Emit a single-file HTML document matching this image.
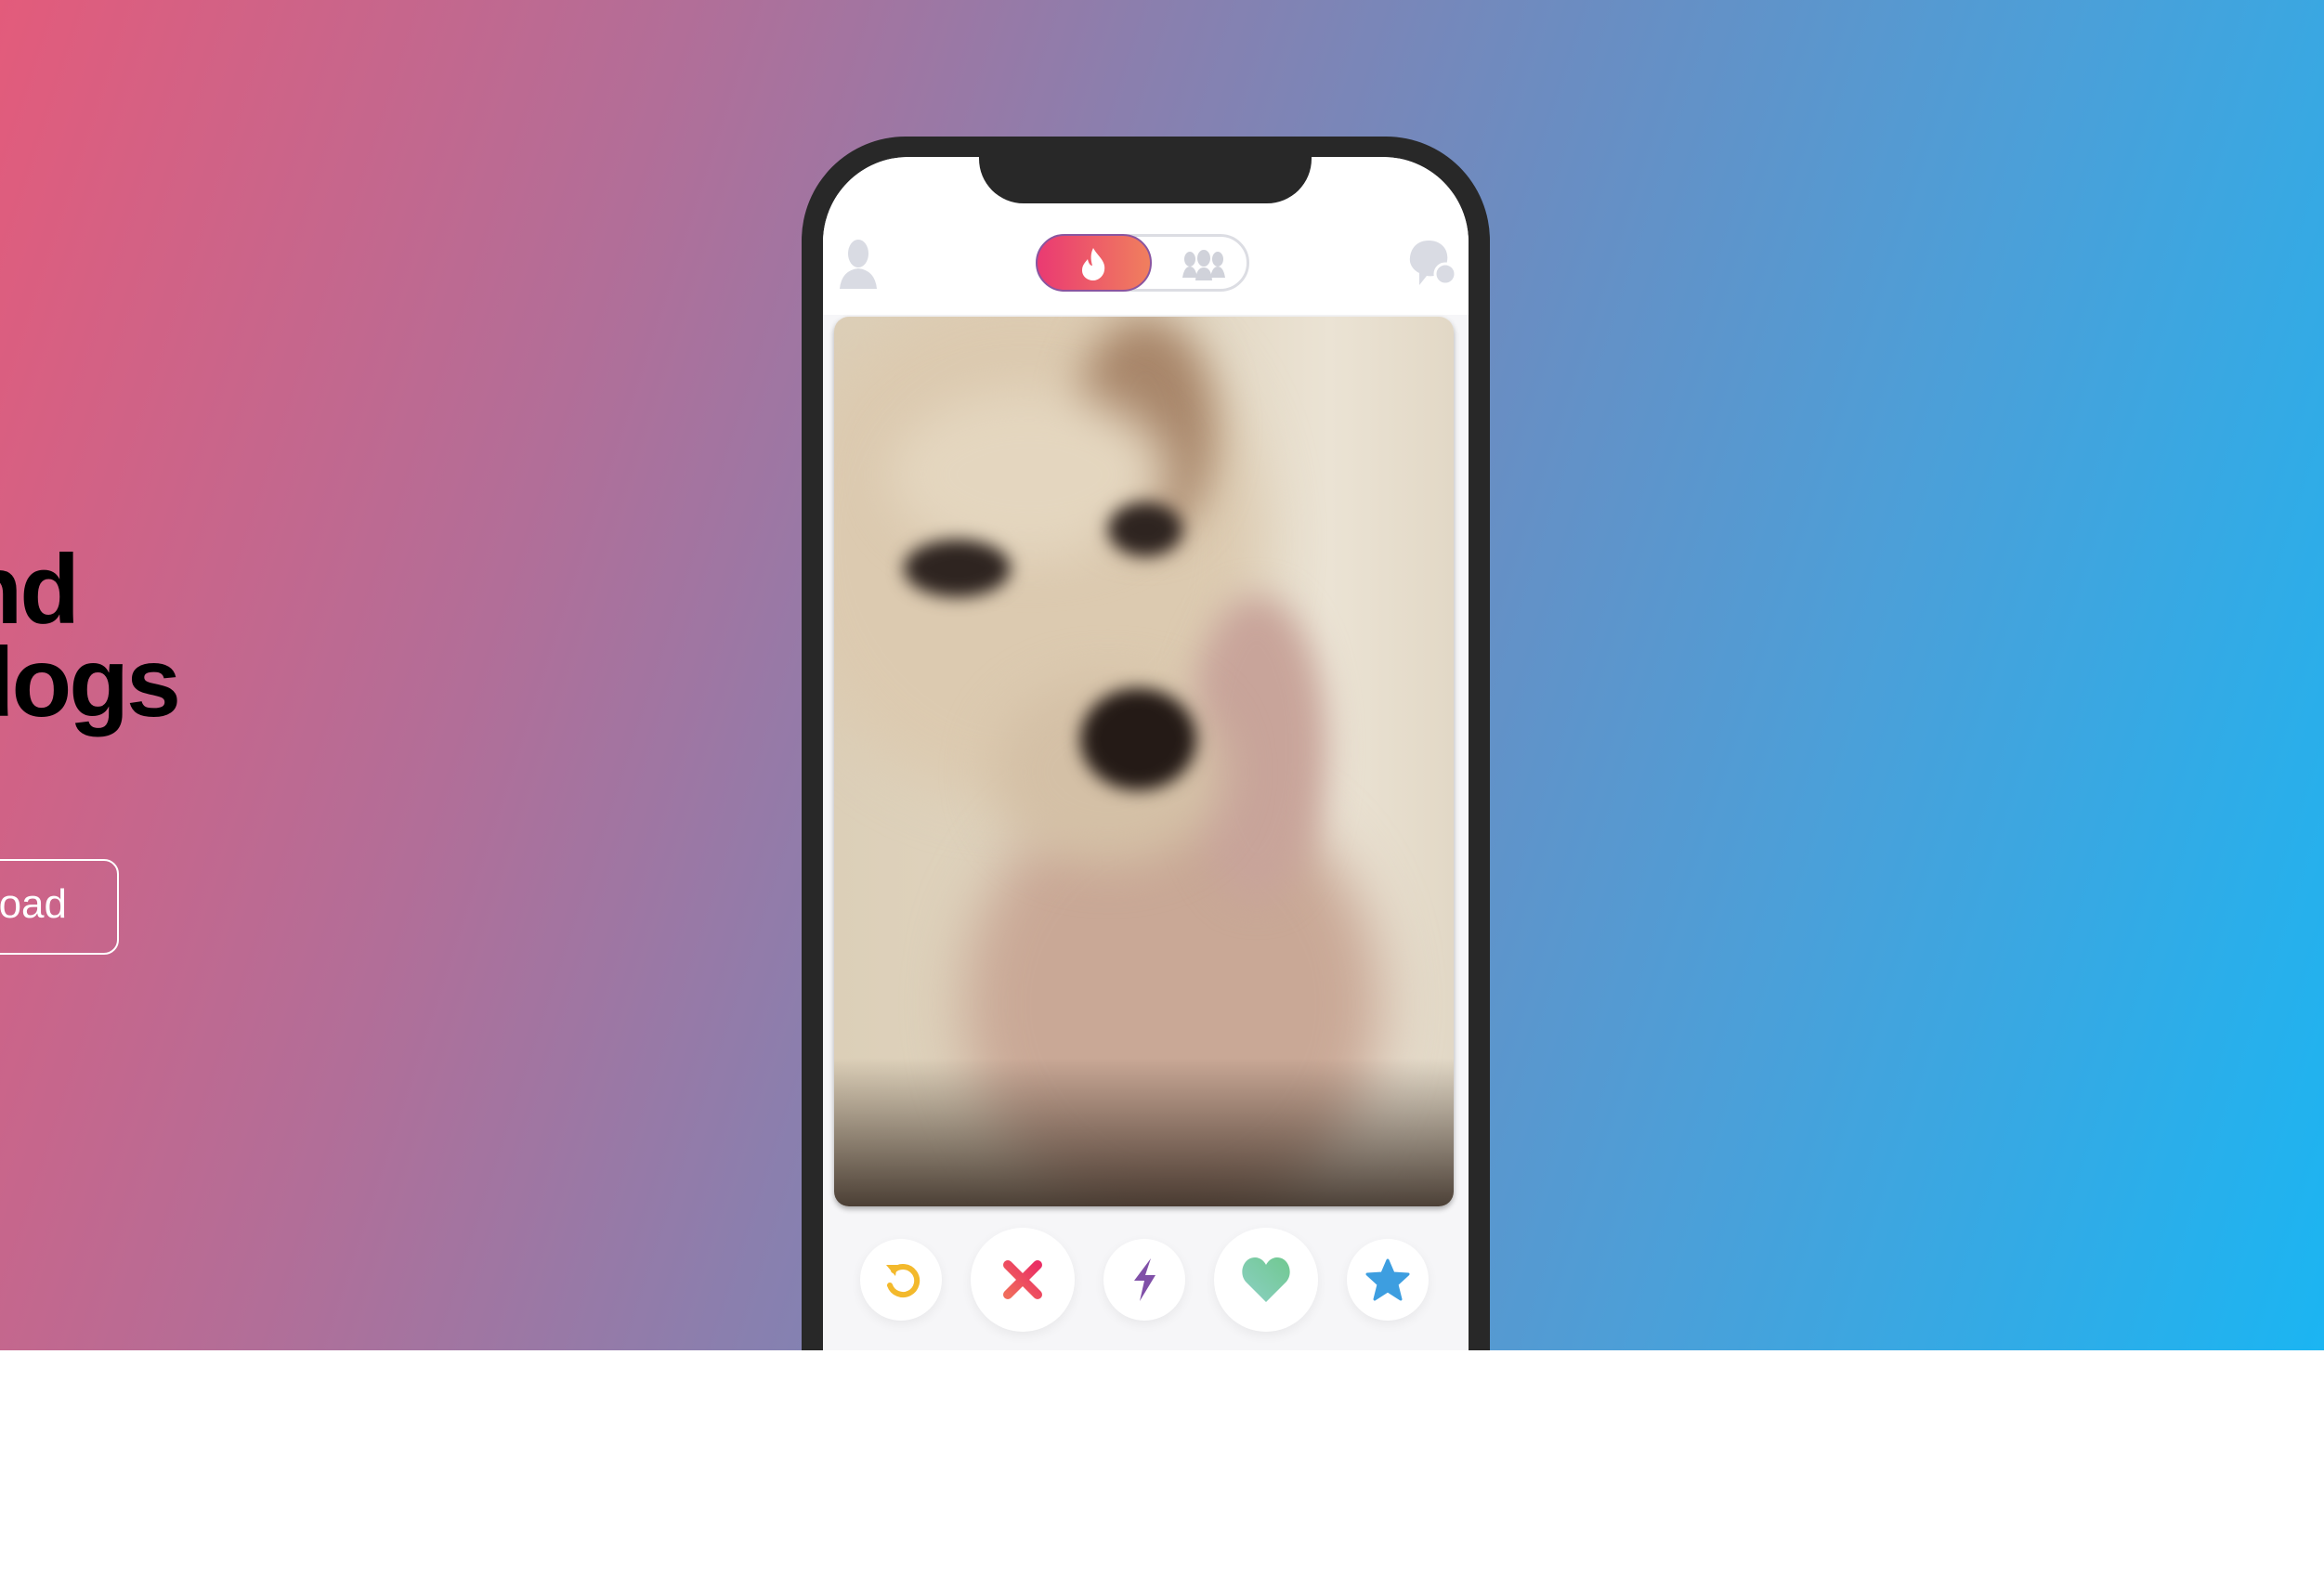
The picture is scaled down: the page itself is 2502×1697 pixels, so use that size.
<!DOCTYPE html>
<html><head><meta charset="utf-8"><style>
*{margin:0;padding:0;box-sizing:border-box}
body{width:2502px;height:1697px;background:#fff;position:relative;overflow:hidden;font-family:"Liberation Sans","DejaVu Sans",sans-serif}
.hero{position:absolute;left:0;top:0;width:2502px;height:1454px;background:linear-gradient(108deg,#e35b7b 0%,#b26e98 25%,#8a7fae 42%,#6a8dc2 58%,#4c9fd8 75%,#1bb5f2 100%);overflow:hidden}
.h{position:absolute;font-weight:bold;font-size:106px;color:#000;white-space:nowrap;line-height:1;letter-spacing:-3px}
.btn{position:absolute;left:-200px;top:925px;width:328px;height:103px;border:2px solid #fff;border-radius:16px}
.btxt{position:absolute;right:2430px;top:952px;font-size:44px;color:#fff;white-space:nowrap;line-height:1}
.phone{position:absolute;left:863px;top:147px;width:741px;height:1400px;background:#282828;border-radius:112px 112px 0 0}
.screen{position:absolute;left:23px;top:22px;width:695px;height:1400px;background:#f6f6f8;border-radius:92px 92px 0 0;overflow:hidden}
.top{position:absolute;left:0;top:0;width:695px;height:170px;background:#fff}
.notch{position:absolute;left:168px;top:-10px;width:358px;height:60px;background:#282828;border-radius:0 0 48px 48px}
.card{position:absolute;left:12px;top:172px;width:667px;height:958px;border-radius:16px;overflow:hidden;background:linear-gradient(90deg,#dccfb8 0%,#e3d8c4 60%,#ebe3d4 80%,#e2d8c6 100%);box-shadow:0 3px 6px rgba(0,0,0,.3)}
.b{position:absolute;border-radius:50%;filter:blur(14px)}
.cbtn{position:absolute;background:#fff;border-radius:50%;box-shadow:0 4px 12px rgba(0,0,0,.06);display:flex;align-items:center;justify-content:center}
</style></head><body>
<div class="hero">
  <div class="h" style="right:2419px;top:582px;">Find</div>
  <div class="h" style="right:2310px;top:682px;">more dogs</div>
  <div class="btn"></div>
  <div class="btxt">Download</div>
</div>
<div class="phone">
 <div class="screen">
  <div class="top"></div>
  <div class="notch"></div>
  <svg style="position:absolute;left:16px;top:88px" width="44" height="56" viewBox="0 0 44 56"><ellipse cx="22" cy="16" rx="11" ry="15" fill="#d9dbe3"/><path d="M2 54 Q4 34 22 32 Q40 34 42 54 Z" fill="#d9dbe3"/></svg>
  <div style="position:absolute;left:229px;top:83px;width:230px;height:62px;border:3px solid #dcdde3;border-radius:31px;background:#fff"></div>
  <div style="position:absolute;left:229px;top:83px;width:125px;height:62px;border-radius:31px;background:linear-gradient(90deg,#ea3a72,#f07f5e);border:2px solid #8a55a0"></div>
  <svg style="position:absolute;left:275px;top:96px" width="32" height="38" viewBox="0 0 32 38"><path d="M16 2 C20 10 30 16 28 26 C27 33 21 37 16 37 C10 37 4 33 4 26 C4 20 8 17 10 14 C11 19 13 21 15 21 C13 14 13 8 16 2Z" fill="#fff"/></svg>
  <svg style="position:absolute;left:385px;top:100px" width="50" height="34" viewBox="0 0 50 34"><g fill="#d0d2da"><ellipse cx="10" cy="10" rx="6" ry="8"/><ellipse cx="25" cy="9" rx="7" ry="9"/><ellipse cx="40" cy="10" rx="6" ry="8"/><path d="M2 30 Q4 18 10 18 Q16 18 18 30Z"/><path d="M16 33 Q17 19 25 19 Q33 19 34 33Z"/><path d="M32 30 Q34 18 40 18 Q46 18 48 30Z"/></g></svg>
  <svg style="position:absolute;left:630px;top:88px" width="54" height="56" viewBox="0 0 54 56"><path d="M22 2 C36 2 44 12 42 24 C40 36 30 42 20 40 L12 50 L12 37 C4 33 1 26 2 20 C3 10 10 2 22 2Z" fill="#d9dbe3"/><circle cx="40" cy="38" r="11" fill="#d9dbe3" stroke="#fff" stroke-width="3"/></svg>
  <div class="card">
    <div class="b" style="left:-60px;top:-40px;width:520px;height:560px;background:#dccab0;filter:blur(30px)"></div>
    <div class="b" style="left:260px;top:0px;width:150px;height:240px;background:#a8866a;filter:blur(22px)"></div>
    <div class="b" style="left:140px;top:500px;width:450px;height:480px;background:#c9a896;filter:blur(30px)"></div>
    <div class="b" style="left:380px;top:300px;width:150px;height:330px;background:#c8a49a;filter:blur(18px)"></div>
    <div class="b" style="left:60px;top:80px;width:300px;height:180px;background:#e4d6bf;filter:blur(25px)"></div>
    <div class="b" style="left:170px;top:390px;width:250px;height:200px;background:#d4c0a6;filter:blur(25px)"></div>
    <div class="b" style="left:75px;top:240px;width:115px;height:62px;background:#2e2420;filter:blur(9px)"></div>
    <div class="b" style="left:295px;top:200px;width:80px;height:58px;background:#2e2420;filter:blur(9px)"></div>
    <div class="b" style="left:265px;top:400px;width:125px;height:110px;background:#241a16;filter:blur(9px)"></div>
    <div style="position:absolute;left:0;bottom:0;width:100%;height:160px;background:linear-gradient(180deg,rgba(40,30,25,0),rgba(50,38,30,.85))"></div>
  </div>
  <div class="cbtn" style="left:40px;top:1165px;width:88px;height:88px"><svg width="44" height="44" viewBox="0 0 44 44"><path d="M14 12 A15 15 0 1 1 10 28" fill="none" stroke="#f3b92c" stroke-width="6" stroke-linecap="round"/><path d="M6 6 L18 6 L16 18 Z" fill="#f3b92c"/></svg></div>
  <div class="cbtn" style="left:159px;top:1153px;width:112px;height:112px"><svg width="48" height="48" viewBox="0 0 48 48"><defs><linearGradient id="gx" x1="0" y1="1" x2="1" y2="0"><stop offset="0" stop-color="#f06b5c"/><stop offset="1" stop-color="#ea2e64"/></linearGradient></defs><path d="M8 8 L40 40 M40 8 L8 40" stroke="url(#gx)" stroke-width="10" stroke-linecap="round"/></svg></div>
  <div class="cbtn" style="left:302px;top:1165px;width:88px;height:88px"><svg width="30" height="50" viewBox="0 0 30 50"><path d="M22 2 L4 26 L15 26 L10 48 L27 20 L16 20 Z" fill="#8050a8"/></svg></div>
  <div class="cbtn" style="left:421px;top:1153px;width:112px;height:112px"><svg width="56" height="52" viewBox="0 0 56 52"><defs><linearGradient id="gh" x1="0" y1="1" x2="1" y2="0"><stop offset="0" stop-color="#8cd0c4"/><stop offset="1" stop-color="#70c890"/></linearGradient></defs><path d="M28 50 L6 28 C-2 18 4 2 16 2 C22 2 26 6 28 10 C30 6 34 2 40 2 C52 2 58 18 50 28 Z" fill="url(#gh)"/></svg></div>
  <div class="cbtn" style="left:564px;top:1165px;width:88px;height:88px"><svg width="48" height="46" viewBox="0 0 48 46"><path d="M24 2 L30 16 L46 17 L34 28 L38 44 L24 35 L10 44 L14 28 L2 17 L18 16 Z" fill="#3d9ee0" stroke="#3d9ee0" stroke-width="3" stroke-linejoin="round"/></svg></div>
 </div>
</div>
<div style="position:absolute;left:0;top:1454px;width:2502px;height:243px;background:#fff"></div>
</body></html>
